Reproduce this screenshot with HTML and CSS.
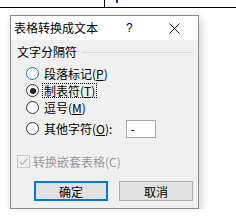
FILE: index.html
```html
<!DOCTYPE html>
<html lang="zh">

<head>
    <meta charset="utf-8">
    <meta name="viewport" content="width=device-width, initial-scale=1.0">
    <title>表格转换成文本</title>
    <link rel="stylesheet" href="styles.css">
</head>

<body>

    <header class="doc">
        <div class="doc-cell"></div>
        <div class="doc-mark"></div>
    </header>

    <section class="dialog">
        <div class="titlebar">
            <span class="title">表格转换成文本</span>
            <span class="help">?</span>
            <span class="close">
                <svg width="11" height="11" viewBox="0 0 11 11">
                    <path d="M0.5 0.5 L10.5 10.5 M10.5 0.5 L0.5 10.5" stroke="#111" stroke-width="1" fill="none" />
                </svg>
            </span>
        </div>

        <div class="content">
            <div class="group">
                <span>文字分隔符</span>
                <span class="rule"></span>
            </div>

            <div class="option">
                <span class="radio hover"></span>
                <span class="label">段落标记(<u>P</u>)</span>
            </div>
            <div class="option">
                <span class="radio checked"></span>
                <span class="label focus">制表符(<u>T</u>)</span>
            </div>
            <div class="option">
                <span class="radio"></span>
                <span class="label">逗号(<u>M</u>)</span>
            </div>
            <div class="option other">
                <span class="radio"></span>
                <span class="label">其他字符(<u>O</u>):</span>
                <span class="field">-</span>
            </div>

            <div class="check">
                <span class="box">
                    <svg width="11" height="11" viewBox="0 0 11 11">
                        <path d="M1.5 5.5 L4.2 8.3 L9.5 2.5" stroke="#bdbdbd" stroke-width="1.3" fill="none" />
                    </svg>
                </span>
                <span>转换嵌套表格(C)</span>
            </div>

            <div class="buttons">
                <button class="btn default">确定</button>
                <button class="btn">取消</button>
            </div>
        </div>
    </section>

</body></html>
```

FILE: styles.css
```css
body {
    margin: 0;
    background: #fff;
    font-family: "Noto Sans CJK SC", "Liberation Sans", sans-serif;
    font-size: 12px;
    color: #000;
}

.doc {
    display: flex;
    height: 7px;
    border-bottom: 1px solid #000;
}

.doc-cell {
    width: 104px;
    border-right: 1px solid #000;
}

.doc-mark {
    width: 2px;
    height: 3px;
    margin-left: 11px;
    background: #1a3a6a;
}

.dialog {
    width: 187px;
    margin: 7px 0 0 10px;
    border: 1px solid #8a8a8a;
    background: #f0f0f0;
    box-shadow: 2px 3px 9px rgba(0, 0, 0, .2);
}

.titlebar {
    display: flex;
    align-items: center;
    height: 24px;
    background: #fff;
}

.title {
    margin-left: 3px;
    line-height: 12px;
}

.help {
    margin-left: 28px;
    font-family: "Liberation Sans", sans-serif;
    font-size: 12px;
}

.close {
    display: flex;
    margin-left: 36px;
}

.content {
    padding: 6px 5px 7px 0;
}

.group {
    display: flex;
    align-items: center;
    height: 12px;
    line-height: 12px;
    padding-left: 6px;
}

.rule {
    flex: 1;
    height: 1px;
    margin-left: 5px;
    background: #dadada;
}

.option {
    display: flex;
    align-items: center;
    height: 17px;
    padding-left: 15px;
}

.group + .option {
    margin-top: 7px;
}

.option.other {
    margin-top: 4px;
}

.radio {
    box-sizing: border-box;
    width: 13px;
    height: 13px;
    border: 1px solid #333;
    border-radius: 50%;
    background: #fff;
    display: flex;
    align-items: center;
    justify-content: center;
}

.radio.hover {
    border-color: #0078d7;
}

.radio.checked::after {
    content: "";
    width: 6px;
    height: 6px;
    border-radius: 50%;
    background: #222;
}

.label {
    margin-left: 3px;
    padding: 0 1px;
    line-height: 13px;
    border: 1px dotted transparent;
}

.label.focus {
    border-color: #000;
}

.field {
    box-sizing: border-box;
    width: 30px;
    height: 18px;
    margin-left: 12px;
    padding-left: 3px;
    line-height: 15px;
    border: 1px solid #a8a8a8;
    background: #fff;
}

.check {
    display: flex;
    align-items: center;
    height: 13px;
    margin-top: 18px;
    padding-left: 6px;
    color: #9a9a9a;
}

.box {
    box-sizing: border-box;
    display: flex;
    align-items: center;
    justify-content: center;
    width: 13px;
    height: 13px;
    margin-right: 3px;
    border: 1px solid #c8c8c8;
    background: #f0f0f0;
}

.buttons {
    display: flex;
    gap: 11px;
    margin-top: 13px;
    padding-left: 23px;
}

.btn {
    box-sizing: border-box;
    width: 74px;
    height: 20px;
    padding: 0;
    font-family: inherit;
    font-size: 12px;
    color: #000;
    background: #e1e1e1;
    border: 1px solid #adadad;
    border-radius: 0;
}

.btn.default {
    border: 2px solid #0078d7;
}
```
